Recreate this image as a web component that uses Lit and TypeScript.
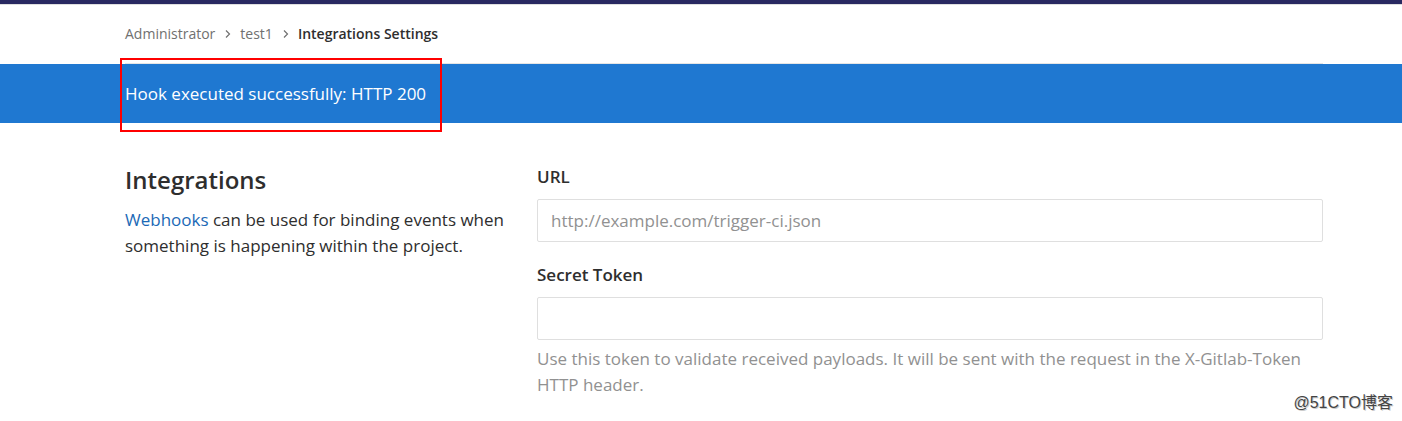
import { LitElement, html, css } from "lit";
import { customElement } from "lit/decorators.js";

const chevron = html`<svg class="chevron" viewBox="0 0 8 10" aria-hidden="true">
  <path d="M2 1.5 L5.5 5 L2 8.5" fill="none" stroke="currentColor" stroke-width="1.2" />
</svg>`;

@customElement("app-root")
export class AppRoot extends LitElement {
  static styles = css`
    :host {
      display: block;
      position: relative;
      min-height: 100vh;
      box-sizing: border-box;
      background: #fff;
      color: #2e2e2e;
      font: 17px/26px "Open Sans", "Noto Sans", sans-serif;
    }
    * {
      box-sizing: border-box;
    }
    a {
      color: inherit;
      text-decoration: none;
    }
    .navbar {
      height: 5px;
      background: #292961;
      border-bottom: 1px solid #dfdfdf;
    }
    .container {
      padding: 0 79px 0 125px;
    }
    .breadcrumbs {
      display: flex;
      align-items: center;
      height: 59px;
      border-bottom: 1px solid #e5e5e5;
      font-size: 14px;
      line-height: 20px;
      color: #707070;
    }
    .chevron {
      width: 8px;
      height: 10px;
      margin: 0 8px 0 9px;
    }
    .current {
      margin: 0;
      font-size: 14px;
      font-weight: 600;
      color: #2e2e2e;
    }
    .flash {
      padding-top: 17px;
      padding-bottom: 16px;
      background: #1f78d1;
      color: #fff;
    }
    .message {
      position: relative;
      display: block;
      width: fit-content;
    }
    .highlight {
      position: absolute;
      inset: -23px -16px -25px -5px;
      border: 2px solid #f00;
    }
    .settings {
      display: grid;
      grid-template-columns: 1fr 2fr;
      gap: 19px;
      padding-top: 40px;
    }
    h2 {
      margin: 0 0 10px;
      font-size: 24px;
      line-height: 34px;
      font-weight: 600;
    }
    p {
      margin: 0;
    }
    .link {
      color: #1b69b6;
    }
    form {
      padding-top: 1px;
    }
    .field {
      display: flex;
      flex-direction: column;
      margin-bottom: 20px;
    }
    label {
      margin-bottom: 9px;
      font-weight: 600;
    }
    input {
      width: 100%;
      height: 43px;
      padding: 0 13px;
      border: 1px solid #dfdfdf;
      border-radius: 2px;
      background: #fff;
      color: #2e2e2e;
      font: inherit;
    }
    input::placeholder {
      color: #919191;
      opacity: 1;
    }
    .help {
      margin-top: 6px;
      color: #919191;
    }
    .watermark {
      position: absolute;
      right: 9px;
      bottom: 6px;
      font: 16px/24px "Liberation Sans", "Noto Sans CJK SC", sans-serif;
      color: #444;
      text-shadow: 1px 1px 0 #ccc;
    }
  `;

  render() {
    return html`
      <header class="navbar"></header>
      <div class="container">
        <nav class="breadcrumbs" aria-label="Breadcrumb">
          <a href="#">Administrator</a>${chevron}
          <a href="#">test1</a>${chevron}
          <h1 class="current">Integrations Settings</h1>
        </nav>
      </div>
      <div class="flash container" role="status">
        <span class="message">Hook executed successfully: HTTP 200<span class="highlight"></span></span>
      </div>
      <main class="container settings">
        <section>
          <h2>Integrations</h2>
          <p><a class="link" href="#">Webhooks</a> can be used for binding events when something is happening within the project.</p>
        </section>
        <form>
          <div class="field">
            <label for="url">URL</label>
            <input id="url" type="text" placeholder="http://example.com/trigger-ci.json" />
          </div>
          <div class="field">
            <label for="token">Secret Token</label>
            <input id="token" type="text" aria-describedby="token-help" />
            <p class="help" id="token-help">Use this token to validate received payloads. It will be sent with the request in the X-Gitlab-Token HTTP header.</p>
          </div>
        </form>
      </main>
      <div class="watermark">@51CTO博客</div>
    `;
  }
}
